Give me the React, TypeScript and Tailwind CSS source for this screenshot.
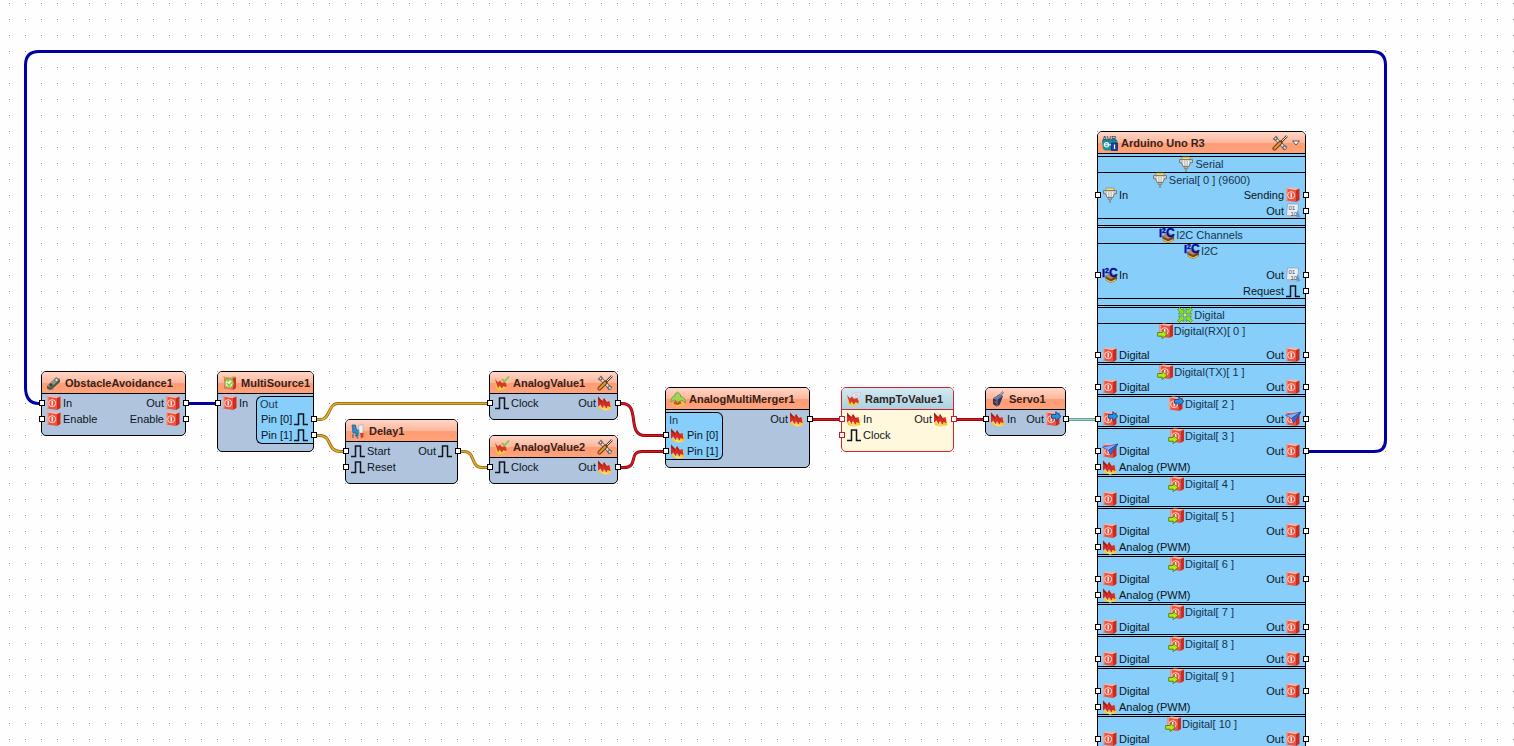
import type { ReactNode } from "react";
import clsx from "clsx";

type IconName =
  | "digital"
  | "digitalIn"
  | "digitalOut"
  | "digitalLink"
  | "analog"
  | "pulse"
  | "serial"
  | "binary"
  | "i2c"
  | "group"
  | "tools"
  | "sensor"
  | "multi"
  | "delay"
  | "analogValue"
  | "merger"
  | "ramp"
  | "servo"
  | "board";

type Pin = { label: string; icon: IconName };
type PinRow = { in?: Pin; out?: Pin };

const digital: Pin = { label: "Digital", icon: "digital" };
const pwm: Pin = { label: "Analog (PWM)", icon: "analog" };
const outDigital: Pin = { label: "Out", icon: "digital" };
const outAnalog: Pin = { label: "Out", icon: "analog" };
const clock: Pin = { label: "Clock", icon: "pulse" };

const redPage = (
  <>
    <path d="M1 1.500 11 3v12L1 13.500z" fill="#ea5440" />
    <path d="M1 1.500 5 .5 14.500 1.500 11 3z" fill="#fbb5a6" />
    <path d="M11 3l3.500-1.500V13L11 15z" fill="#cf2a1e" />
    <path d="M1 1.500 2.500 1.700V13.700L1 13.500z" fill="#f79a88" />
    <circle cx="6.200" cy="8.200" r="3.500" fill="none" stroke="#ffd9d0" strokeWidth="1" />
    <path d="M6.200 6v4.400" stroke="#fff" strokeWidth="1.300" />
  </>
);

const redPeaks = (
  <>
    <path d="M1 10 6 13 13 7.500 14.500 14 8 15.500 2 14z" fill="#f3c62f" />
    <path d="M2 12 8 13.500 14.500 14 8 15.500z" fill="#f7e07a" />
    <path d="M1 11.500V1.500L5 6 7 3 9.500 7 12.500 6 13.500 12 10.500 11 9.500 13.500 7 10 5.500 13 3.500 9.500z" fill="#dc2a1e" />
    <path d="M1 1.500 5 6v2L1 4.500z" fill="#99231a" />
    <path d="M7 3 9.500 7v2L7 5.500z" fill="#a8281c" />
  </>
);

const smallPeaks = (
  <>
    <path d="M1 5 6 12 13 9v4l-8 2.500L2 13z" fill="#f5cf45" />
    <path d="M1 4 4 7.500 6 5.500 8 8 11 7 12.500 9.500v3L9.500 11 8 13.500 5.500 10.500 4 13.500z" fill="#d6382a" />
  </>
);

const greenArrow = (
  <path d="M.700 9.500h4.500V7L10 11.500 5.200 15.700v-2.500H.700z" fill="#b5e61d" stroke="#4f7f10" strokeWidth=".9" />
);

const icons: Record<IconName, ReactNode> = {
  digital: redPage,
  digitalIn: (
    <>
      <g transform="translate(1.500 0)">{redPage}</g>
      {greenArrow}
    </>
  ),
  digitalOut: (
    <>
      {redPage}
      <path d="M6.500 3.500h4.300V.700L16 5.300 10.800 10V7.200H6.500z" fill="#2f8fe0" stroke="#0d4a8c" strokeWidth=".9" />
    </>
  ),
  digitalLink: (
    <>
      {redPage}
      <path d="M.500 4 16 1 6.500 7.500z" fill="#86aef5" stroke="#2c52b8" strokeWidth=".7" />
      <path d="M6.500 7.500 16 1 8.500 12z" fill="#3d68cf" stroke="#2344a0" strokeWidth=".7" />
    </>
  ),
  analog: redPeaks,
  pulse: <path d="M1 13.500h4.500V3h5v10.500H15" fill="none" stroke="#10161f" strokeWidth="1.500" />,
  serial: (
    <>
      <path d="M4 1h8v3.500H4z" fill="#f3df79" stroke="#9a8a45" strokeWidth=".7" />
      <path d="M1.500 3.500h13v3.200h-2L11 10.500H5L3.500 6.700h-2z" fill="#c9c9c4" stroke="#73736e" strokeWidth=".9" />
      <path d="M5.500 4.500v5M8 4.500v5M10.500 4.500v5" stroke="#f5f5f2" strokeWidth=".9" />
      <path d="M6.300 10.500h3.400v2.200H6.300z" fill="#b3b3ad" stroke="#73736e" strokeWidth=".7" />
      <path d="M8 12.700V16" stroke="#85857f" strokeWidth="1.400" />
    </>
  ),
  binary: (
    <>
      <path d="M2.500 1h11l-.5 11.500H1.500z" fill="#e6edf5" stroke="#8a9bb0" strokeWidth=".7" />
      <path d="M1 12h12l2 3H2.500z" fill="#a9bfd9" />
      <path d="M12 7l3.500 7-4 .500z" fill="#6f96c8" />
      <text x="3.500" y="7" fontSize="6" fill="#47525e">01</text>
      <text x="5.500" y="12.500" fontSize="6" fill="#47525e">10</text>
    </>
  ),
  i2c: (
    <>
      <path d="M3 9l6-3 6 2.500v4.500L9 16l-5-2.500z" fill="#6d4a2c" />
      <path d="M3 9l6-3 6 2.500L9 12z" fill="#b58a54" />
      <path d="M4 12.500 9 15l5.500-2.500" fill="none" stroke="#f0c93c" strokeWidth="1.200" />
      <g fontWeight="bold" fill="#0a0a9c" stroke="#0a0a9c" strokeWidth=".4">
        <text x="0" y="9.500" fontSize="11">I</text>
        <text x="3" y="5.500" fontSize="7">2</text>
        <text x="7" y="10" fontSize="12">C</text>
      </g>
    </>
  ),
  group: (
    <>
      <g fill="#8fdc2b" stroke="#3f8f1a" strokeWidth=".7">
        <path d="M.500 2.500 2.500.500 5 3 7 1.500V7H1.500L3 5z" />
        <path d="M15.500 2.500 13.500.500 11 3 9 1.500V7h5.500L13 5z" />
        <path d="M.500 13.500 2.500 15.500 5 13l2 1.500V9H1.500L3 11z" />
        <path d="M15.500 13.500 13.500 15.500 11 13l-2 1.500V9h5.500L13 11z" />
      </g>
      <circle cx="8" cy="8" r="1.200" fill="#e9ee46" />
    </>
  ),
  tools: (
    <>
      <path d="M3.500 3.500 13 13" stroke="#5c5c5c" strokeWidth="3.200" strokeLinecap="round" />
      <path d="M3.500 3.500 13 13" stroke="#e4e4e4" strokeWidth="1.800" strokeLinecap="round" />
      <path d="M1 3.500 3.500 5.500 5.500 3.500 3.500 1M15 12.500 12.500 10.500 10.500 12.500 12.500 15" fill="none" stroke="#6b6b6b" strokeWidth="1.300" />
      <path d="M15 1 8 8" stroke="#4a3d33" strokeWidth="2.400" />
      <path d="M15 1 9 7" stroke="#e8e0d8" strokeWidth="1" />
      <path d="M8.500 7.500 2.500 13.500" stroke="#6e3c12" strokeWidth="4" strokeLinecap="round" />
      <path d="M8 8 2.500 13.500" stroke="#e39339" strokeWidth="2.200" strokeLinecap="round" />
    </>
  ),
  sensor: (
    <>
      <path d="M1 11 10 2.500l4 1.500v3L5 15 1 13.500z" fill="#4d5548" />
      <path d="M1 11 10 2.500l4 1.500-9 8.500z" fill="#8f9885" />
      <circle cx="10.500" cy="5" r="1.700" fill="#e1e4da" stroke="#3a4036" strokeWidth=".6" />
      <circle cx="5" cy="10" r="1.700" fill="#3a4036" />
      <path d="M3 14v1.500M7 13.500V15" stroke="#907a35" />
    </>
  ),
  multi: (
    <>
      <path d="M2 2 11 3v12L2 13.500z" fill="#ee6a55" />
      <path d="M11 3l3-1v11l-3 2z" fill="#cc3526" />
      <circle cx="7" cy="8.500" r="4" fill="#f4f2e4" stroke="#8fc94f" strokeWidth="1.500" />
      <path d="M1.500 1.500 6 6 12.500 1M5 8l2 3 3-4" fill="none" stroke="#8cc63f" strokeWidth="1.500" />
    </>
  ),
  delay: (
    <>
      <path d="M2 2h3.500l1 5H10v3H8v3H6v-3H3z" fill="#2c8fcb" stroke="#125a8c" strokeWidth=".7" />
      <path d="M3 11v4M5.500 12 8 15.500" stroke="#3b6c95" strokeWidth="1.200" />
      <path d="M8.500 2.500 13 1.500v10l-3.500 1z" fill="#eef0f2" stroke="#9ba5b0" strokeWidth=".6" />
      <path d="M10 10h3.500v4l-2.500 1.500z" fill="#d9402c" />
    </>
  ),
  analogValue: (
    <>
      {smallPeaks}
      <path d="M8 4 10.500 6.500 15 1.500" fill="none" stroke="#8bc34a" strokeWidth="1.800" />
      <path d="M12.500 5.500 14.500 5l.5 3-2 .5z" fill="#c5e1a5" />
    </>
  ),
  merger: (
    <>
      <path d="M2 13.500 5 10l3 2 3-2.500 4 4-7 2z" fill="#f0c43b" />
      <path d="M5 9.500 7.500 12 10 9.500l1.500 3-4 1.500-4-1z" fill="#cf4a2a" />
      <path d="M1 11C1 6 3 5.500 5 5L5 3 7.500 1 10.500 3.500 10.500 5.500C14 6 15.500 8 15.500 12L12 9 8 11 4.500 9z" fill="#9fd65a" stroke="#5c9627" strokeWidth=".7" />
    </>
  ),
  ramp: (
    <>
      {smallPeaks}
      <path d="M6 4.500 8 2h7l-2 4H8z" fill="#fafafa" stroke="#c7b9c9" strokeWidth=".8" />
      <path d="M8.500 4h4" stroke="#d8848c" strokeWidth=".9" />
    </>
  ),
  servo: (
    <>
      <path d="M3 7.500 9 3.500l4 1.500-3.500 9-3 1.500L3 13z" fill="#2b3554" />
      <path d="M3 7.500 9 3.500l4 1.500-6 4z" fill="#6c7da8" />
      <path d="M7 9v6" stroke="#8492bb" strokeWidth=".8" />
      <path d="M9.500 4 12.500.500 13.500 1.500 11 5z" fill="#aeb6c4" stroke="#434a5c" strokeWidth=".6" />
      <path d="M4.500 10.500 6 11.500" stroke="#e35a3a" strokeWidth="1.300" />
    </>
  ),
  board: (
    <>
      <path d="M0 6 2 4h12l1.500 2v7L13 15.500H3L1 14z" fill="#1d8d93" />
      <circle cx="4.500" cy="9.800" r="2.200" fill="none" stroke="#e8fafa" strokeWidth="1.200" />
      <path d="M3 9.800h7" stroke="#e8fafa" strokeWidth="1.100" />
      <path d="M9.500 8H15.500V15.500H9.500z" fill="#1c3fae" stroke="#0c1f62" strokeWidth=".7" />
      <path d="M12.500 9.500v4.500" stroke="#fff" strokeWidth="1.200" />
      <text x="0" y="5.500" fontSize="7" fontWeight="bold" fill="#3c5a78">AVR</text>
    </>
  ),
};

function Icon({ name }: { name: IconName }) {
  return (
    <svg viewBox="0 0 16 16" className="size-4 shrink-0" aria-hidden="true">
      {icons[name]}
    </svg>
  );
}

function Socket({ side, selected }: { side: "left" | "right"; selected?: boolean }) {
  return (
    <span
      className={clsx(
        "absolute top-[5px] size-1.5 border bg-white",
        side === "left" ? "-left-[3px]" : "-right-1",
        selected ? "border-[#c41e2a]" : "border-black",
      )}
    />
  );
}

function Row({ row, selected }: { row: PinRow; selected?: boolean }) {
  return (
    <div className="relative flex h-4 items-center justify-between px-1 whitespace-nowrap">
      {row.in ? (
        <span className="flex items-center gap-px">
          <Socket side="left" selected={selected} />
          <Icon name={row.in.icon} />
          {row.in.label}
        </span>
      ) : (
        <span />
      )}
      {row.out ? (
        <span className="flex items-center gap-px">
          {row.out.label}
          <Icon name={row.out.icon} />
          <Socket side="right" selected={selected} />
        </span>
      ) : null}
    </div>
  );
}

type NodeProps = {
  title: string;
  icon: IconName;
  place: string;
  tools?: boolean;
  menu?: boolean;
  selected?: boolean;
  children: ReactNode;
};

function Node({ title, icon, place, tools, menu, selected, children }: NodeProps) {
  return (
    <section
      className={clsx(
        "absolute rounded-[5px] border",
        place,
        selected ? "border-[#d2202c] bg-[#fff8dc]" : "border-black",
        !selected && (menu ? "bg-[#87cefa]" : "bg-[#b0c4de]"),
      )}
    >
      <header
        className={clsx(
          "flex h-[22px] items-center gap-[3px] rounded-t border-b pr-1 pl-1",
          selected
            ? "border-[#d2202c] bg-linear-to-b from-[#d3e9f0] to-[#a9d3e2]"
            : "border-black bg-[linear-gradient(#ffd6c8,#ffb79c_50%,#ff9c74_55%,#ffa27c)]",
        )}
      >
        <Icon name={icon} />
        <h2 className="grow font-bold whitespace-nowrap text-[#33221d]">{title}</h2>
        {tools ? (
          <button type="button" aria-label={`Configure ${title}`} className="flex">
            <Icon name="tools" />
          </button>
        ) : null}
        {menu ? (
          <button type="button" aria-label="Collapse" className="flex">
            <svg viewBox="0 0 10 8" className="h-2 w-2.5">
              <path d="M1.500 2h7L5 6z" fill="#fff" stroke="#4a4a4a" strokeWidth=".9" />
            </svg>
          </button>
        ) : null}
      </header>
      {children}
    </section>
  );
}

function SimpleNode({ rows, ...props }: Omit<NodeProps, "children"> & { rows: PinRow[] }) {
  return (
    <Node {...props}>
      <div className="pt-px pb-2">
        {rows.map((row, i) => (
          <Row key={i} row={row} selected={props.selected} />
        ))}
      </div>
    </Node>
  );
}

function PinGroup({ label, rows, className }: { label: string; rows: PinRow[]; className: string }) {
  return (
    <div className={clsx("-mb-px mt-px shrink-0 border-y border-black bg-[#87cefa]", className)}>
      <div className="flex h-3.5 items-center px-[3px] text-[#1c3a52]">{label}</div>
      {rows.map((row, i) => (
        <Row key={i} row={row} />
      ))}
    </div>
  );
}

type ChannelData = { name: string; icon?: IconName; rows: PinRow[]; spaced?: boolean; last?: boolean };

const channels: ChannelData[] = [
  { name: "Digital(RX)[ 0 ]", rows: [{ in: digital, out: outDigital }], spaced: true },
  { name: "Digital(TX)[ 1 ]", rows: [{ in: digital, out: outDigital }] },
  {
    name: "Digital[ 2 ]",
    icon: "digitalOut",
    rows: [{ in: { label: "Digital", icon: "digitalOut" }, out: { label: "Out", icon: "digitalLink" } }],
  },
  {
    name: "Digital[ 3 ]",
    rows: [{ in: { label: "Digital", icon: "digitalLink" }, out: outDigital }, { in: pwm }],
  },
  { name: "Digital[ 4 ]", rows: [{ in: digital, out: outDigital }] },
  { name: "Digital[ 5 ]", rows: [{ in: digital, out: outDigital }, { in: pwm }] },
  { name: "Digital[ 6 ]", rows: [{ in: digital, out: outDigital }, { in: pwm }] },
  { name: "Digital[ 7 ]", rows: [{ in: digital, out: outDigital }] },
  { name: "Digital[ 8 ]", rows: [{ in: digital, out: outDigital }] },
  { name: "Digital[ 9 ]", rows: [{ in: digital, out: outDigital }, { in: pwm }] },
  { name: "Digital[ 10 ]", rows: [{ in: digital, out: outDigital }] },
];

function GroupTitle({ name, icon, first }: { name: string; icon: IconName; first?: boolean }) {
  return (
    <div className={clsx("border-black", first ? "pt-0.5" : "mt-1.5 border-t pt-px")}>
      <div className="flex h-[17px] items-center justify-center border-y border-black pr-px pb-px text-[#16334a]">
        <Icon name={icon} />
        <span className="pl-px">{name}</span>
      </div>
    </div>
  );
}

function Channel({ name, icon = "digitalIn", rows, spaced, last }: ChannelData) {
  return (
    <div>
      <h3 className={clsx("flex h-3.5 items-center justify-center gap-px pr-px text-[#16334a]", spaced && "mb-[9px]")}>
        <Icon name={icon} />
        {name}
      </h3>
      {rows.map((row, i) => (
        <Row key={i} row={row} />
      ))}
      <div className={clsx("-mt-px border-t border-black", !last && "h-[3px] border-b")} />
    </div>
  );
}

const wireColors = {
  blue: ["#00008b", "#0000b8"],
  gold: ["#8a6510", "#e8ab28"],
  red: ["#8b0008", "#d81824"],
  teal: ["#4f8a80", "#a9d4cb"],
};

const wires: { color: keyof typeof wireColors; d: string }[] = [
  { color: "blue", d: "M1308 451.500H1374Q1385.500 451.500 1385.500 440V65Q1385.500 51.500 1372 51.500H39Q25.500 51.500 25.500 65V387Q25.500 403.500 39 403.500" },
  { color: "blue", d: "M188 403.500H216" },
  { color: "gold", d: "M316 419.500H321C330 419.500 328 403.500 338 403.500H488" },
  { color: "gold", d: "M316 435.500H320C332 435.500 327 451.500 340 451.500H344" },
  { color: "gold", d: "M460 451.500H464C476 451.500 470 467.500 482 467.500H488" },
  { color: "red", d: "M620 403.500H622C641 403.500 626 435.500 645 435.500H664" },
  { color: "red", d: "M620 467.500H624C639 467.500 628 451.500 642 451.500H664" },
  { color: "red", d: "M812 419.500H840" },
  { color: "red", d: "M956 419.500H984" },
  { color: "teal", d: "M1068 419.500H1096" },
];

function Wires() {
  return (
    <svg className="absolute inset-0 h-full w-full" aria-hidden="true">
      <defs>
        <pattern id="grid" width="16" height="16" patternUnits="userSpaceOnUse">
          <rect x="9" y="3" width="1" height="1" fill="#8a8a8a" />
        </pattern>
      </defs>
      <rect width="100%" height="100%" fill="url(#grid)" />
      {wires.map(({ color, d }) => (
        <g key={d} fill="none">
          <path d={d} stroke={wireColors[color][0]} strokeWidth="3" />
          <path d={d} stroke={wireColors[color][1]} strokeWidth="1.600" />
        </g>
      ))}
    </svg>
  );
}

export default function App() {
  return (
    <main className="relative h-screen w-full overflow-hidden bg-[#fefefe] font-['Liberation_Sans',Arial,sans-serif] text-[11px] leading-[14px] text-[#0b1520]">
      <Wires />

      <SimpleNode
        title="ObstacleAvoidance1"
        icon="sensor"
        place="left-[41px] top-[371px] w-[145px]"
        rows={[
          { in: { label: "In", icon: "digital" }, out: outDigital },
          { in: { label: "Enable", icon: "digital" }, out: { label: "Enable", icon: "digital" } },
        ]}
      />

      <Node title="MultiSource1" icon="multi" place="left-[217px] top-[371px] w-[97px]">
        <div className="flex pt-px pb-2">
          <div className="grow">
            <Row row={{ in: { label: "In", icon: "digital" } }} />
          </div>
          <PinGroup
            label="Out"
            className="w-[57px] rounded-l-md border-l"
            rows={[{ out: { label: "Pin [0]", icon: "pulse" } }, { out: { label: "Pin [1]", icon: "pulse" } }]}
          />
        </div>
      </Node>

      <SimpleNode
        title="Delay1"
        icon="delay"
        place="left-[345px] top-[419px] w-[113px]"
        rows={[
          { in: { label: "Start", icon: "pulse" }, out: { label: "Out", icon: "pulse" } },
          { in: { label: "Reset", icon: "pulse" } },
        ]}
      />

      <SimpleNode
        title="AnalogValue1"
        icon="analogValue"
        place="left-[489px] top-[371px] w-[129px]"
        tools
        rows={[{ in: clock, out: outAnalog }]}
      />

      <SimpleNode
        title="AnalogValue2"
        icon="analogValue"
        place="left-[489px] top-[435px] w-[129px]"
        tools
        rows={[{ in: clock, out: outAnalog }]}
      />

      <Node title="AnalogMultiMerger1" icon="merger" place="left-[665px] top-[387px] w-[145px]">
        <div className="flex pt-px pb-2">
          <PinGroup
            label="In"
            className="w-[57px] rounded-r-md border-r"
            rows={[{ in: { label: "Pin [0]", icon: "analog" } }, { in: { label: "Pin [1]", icon: "analog" } }]}
          />
          <div className="grow">
            <Row row={{ out: outAnalog }} />
          </div>
        </div>
      </Node>

      <SimpleNode
        title="RampToValue1"
        icon="ramp"
        place="left-[841px] top-[387px] w-[113px]"
        selected
        rows={[{ in: { label: "In", icon: "analog" }, out: outAnalog }, { in: clock }]}
      />

      <SimpleNode
        title="Servo1"
        icon="servo"
        place="left-[985px] top-[387px] w-[81px]"
        rows={[{ in: { label: "In", icon: "analog" }, out: { label: "Out", icon: "digitalOut" } }]}
      />

      <Node title="Arduino Uno R3" icon="board" place="left-[1097px] top-[131px] w-[209px]" tools menu>
        <GroupTitle name="Serial" icon="serial" first />
        <Channel
          name="Serial[ 0 ] (9600)"
          icon="serial"
          last
          rows={[
            { in: { label: "In", icon: "serial" }, out: { label: "Sending", icon: "digital" } },
            { out: { label: "Out", icon: "binary" } },
          ]}
        />
        <GroupTitle name="I2C Channels" icon="i2c" />
        <Channel
          name="I2C"
          icon="i2c"
          spaced
          last
          rows={[
            { in: { label: "In", icon: "i2c" }, out: { label: "Out", icon: "binary" } },
            { out: { label: "Request", icon: "pulse" } },
          ]}
        />
        <GroupTitle name="Digital" icon="group" />
        {channels.map((channel) => (
          <Channel key={channel.name} {...channel} />
        ))}
      </Node>
    </main>
  );
}
